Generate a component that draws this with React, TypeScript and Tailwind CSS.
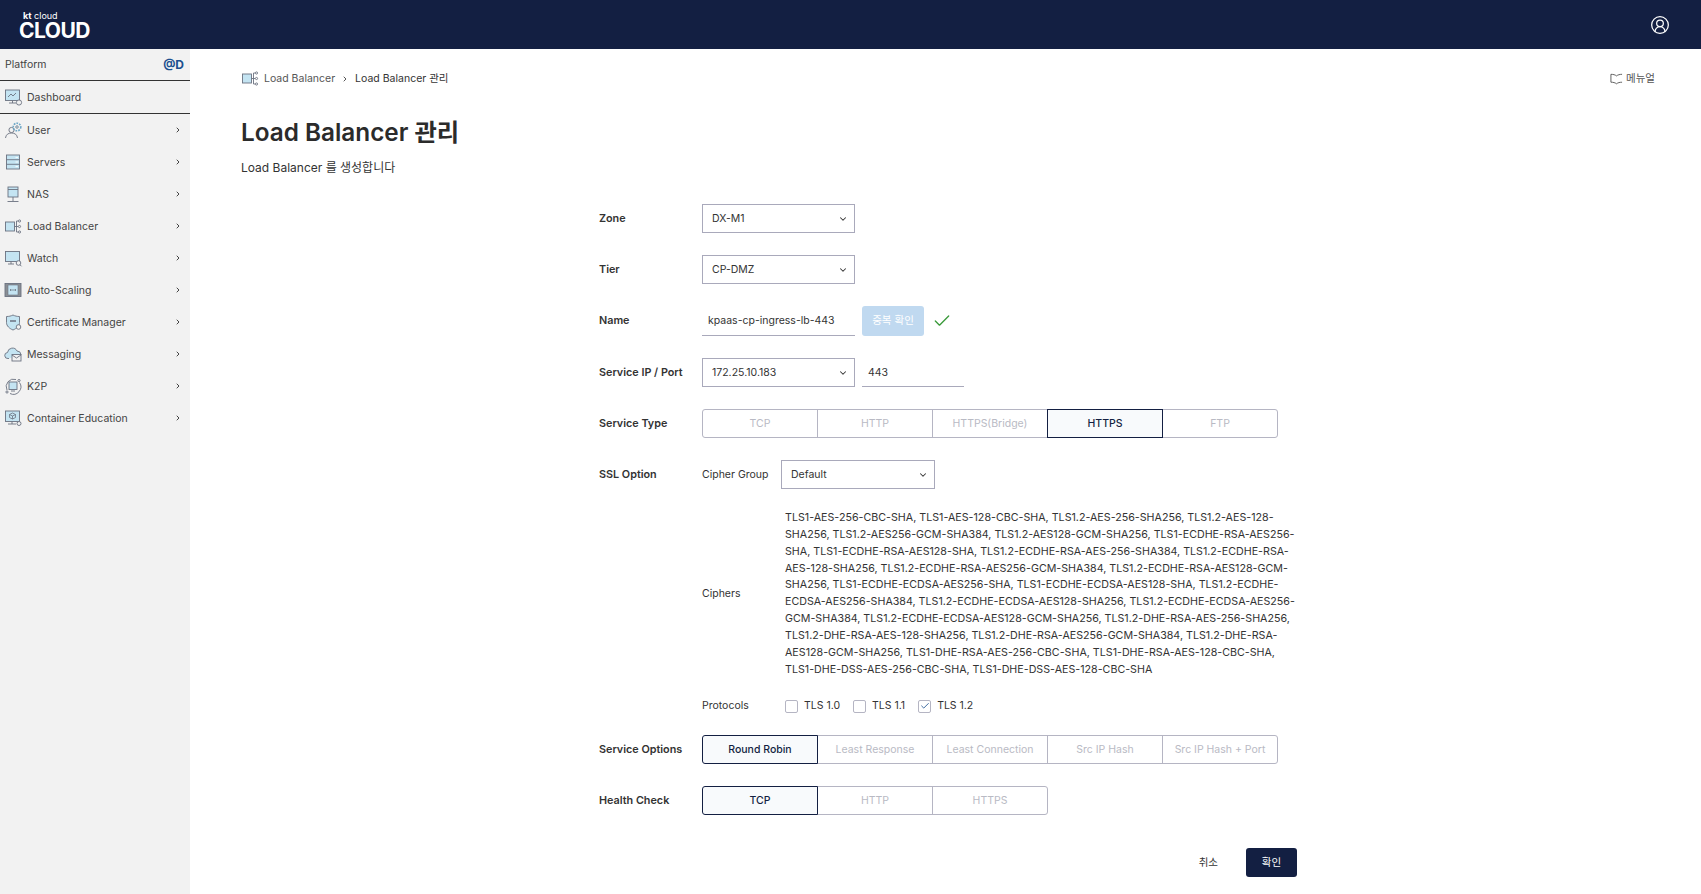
import { ChevronDown, ChevronRight, Check, CircleUserRound } from "lucide-react";
import type { ReactNode } from "react";

const line = "#6b7280";
const tint = "#c4e4f2";

const icons: Record<string, ReactNode> = {
  dashboard: (
    <>
      <rect x="1.500" y="2" width="14" height="10.500" fill={tint} stroke={line} />
      <path d="M4 9l3-3 2 2 3-3" fill="none" stroke={line} />
      <path d="M5 15h7M8.500 12.500V15" stroke={line} />
      <circle cx="15" cy="14.500" r="2.600" fill="#f2f2f2" stroke={line} />
    </>
  ),
  user: (
    <>
      <circle cx="7.500" cy="9" r="2.600" fill="none" stroke={line} />
      <path d="M1.500 17c.5-3.500 2.700-5 6-5s5.500 1.500 6 5" fill="none" stroke={line} />
      <circle cx="13" cy="6" r="3.800" fill="none" stroke="#6fa8c7" strokeWidth="1.600" strokeDasharray="1.800 1" />
      <circle cx="13" cy="6" r="1.300" fill={tint} stroke={line} strokeWidth="0.700" />
    </>
  ),
  servers: (
    <>
      <rect x="2.500" y="2" width="13" height="14" fill={tint} stroke={line} />
      <path d="M2.500 6.700h13M2.500 11.300h13" stroke={line} />
      <path d="M11.500 4.400h2.500M11.500 9h2.500M11.500 13.600h2.500" stroke="#fff" />
    </>
  ),
  nas: (
    <>
      <rect x="4" y="2" width="10" height="10" fill={tint} stroke={line} />
      <path d="M4 4.500h10M9 12v4M3.500 16.500h11" stroke={line} />
    </>
  ),
  lb: (
    <>
      <rect x="1.500" y="5" width="9" height="9" fill={tint} stroke={line} />
      <path d="M10.500 9.500h2M12.500 4v11M12.500 4h1.500M12.500 15h1.500M12.500 9.500h1.500" fill="none" stroke={line} />
      <circle cx="15.500" cy="4" r="1.100" fill="none" stroke={line} />
      <circle cx="15.500" cy="9.500" r="1.100" fill="none" stroke={line} />
      <circle cx="15.500" cy="15" r="1.100" fill="none" stroke={line} />
    </>
  ),
  watch: (
    <>
      <rect x="1.500" y="2.500" width="14" height="10" fill={tint} stroke={line} />
      <path d="M4 15h6M7 12.500V15" stroke={line} />
      <circle cx="14.500" cy="14" r="2.300" fill="#f2f2f2" stroke={line} />
      <path d="M16 15.800l1.500 1.500" stroke={line} />
    </>
  ),
  scaling: (
    <>
      <rect x="1" y="2.500" width="16" height="13" fill="#8a8f94" stroke={line} />
      <rect x="4" y="4" width="10" height="10" fill={tint} stroke={line} strokeWidth="0.600" />
      <path d="M6 9h6M6 9l1-1M6 9l1 1M12 9l-1-1M12 9l-1 1" fill="none" stroke={line} strokeWidth="0.700" />
    </>
  ),
  cert: (
    <>
      <path d="M2.500 3.500c2.500 0 4.500-.5 6.500-1.500 2 1 4 1.500 6.500 1.500v6c0 3.500-3 6-6.500 7.500-3.500-1.500-6.500-4-6.500-7.500z" fill={tint} stroke={line} />
      <path d="M6 8h6" stroke={line} strokeWidth="1.500" />
      <circle cx="14.500" cy="14" r="2.300" fill="#f2f2f2" stroke={line} />
    </>
  ),
  messaging: (
    <>
      <path d="M5 13.500H4a3 3 0 0 1-.5-6 5 5 0 0 1 9.500-1.500 4 4 0 0 1 4 3.500" fill={tint} stroke={line} />
      <rect x="8" y="9.500" width="9" height="6.500" fill="#f2f2f2" stroke={line} />
      <path d="M8 10l4.500 3 4.500-3" fill="none" stroke={line} />
    </>
  ),
  k2p: (
    <>
      <path d="M3 13a7.500 7.500 0 0 1 9-10.500M15.500 5.500a7.500 7.500 0 0 1-9.500 11" fill="none" stroke={line} />
      <rect x="5" y="5" width="8" height="7.500" fill={tint} stroke={line} />
      <path d="M7 14h4" stroke={line} />
      <circle cx="15" cy="3.500" r="1.100" fill="none" stroke={line} />
      <circle cx="3" cy="15" r="1.100" fill="none" stroke={line} />
    </>
  ),
  container: (
    <>
      <rect x="1.500" y="2" width="14" height="10.500" fill={tint} stroke={line} />
      <path d="M8.500 4l3 1.500v3l-3 1.500-3-1.500v-3zM5.500 5.500l3 1.500 3-1.500M8.500 7v3" fill="none" stroke={line} strokeWidth="0.800" />
      <path d="M4 15h8M8 12.500V15" stroke={line} />
      <circle cx="15" cy="14.500" r="2" fill="#f2f2f2" stroke={line} />
    </>
  ),
};

function NavIcon({ name }: { name: string }) {
  return (
    <svg viewBox="0 0 19 19" className="w-[19px] h-[19px] shrink-0" strokeWidth="0.900">
      {icons[name]}
    </svg>
  );
}

const menu = [
  ["User", "user"],
  ["Servers", "servers"],
  ["NAS", "nas"],
  ["Load Balancer", "lb"],
  ["Watch", "watch"],
  ["Auto-Scaling", "scaling"],
  ["Certificate Manager", "cert"],
  ["Messaging", "messaging"],
  ["K2P", "k2p"],
  ["Container Education", "container"],
];

function Sidebar() {
  return (
    <aside className="w-[190px] shrink-0 bg-[#f2f2f2] text-[#444] text-[10.5px]">
      <div className="h-[31px] pl-[5px] pr-[6px] flex items-center justify-between">
        <span>Platform</span>
        <span className="font-bold text-[12px] text-[#1b4f8f]">@D</span>
      </div>
      <div className="h-[34px] flex items-center gap-[4px] pl-[4px] border-y border-[#333]">
        <NavIcon name="dashboard" />
        <span className="pt-[1px]">Dashboard</span>
      </div>
      <div>
        {menu.map(([label, icon]) => (
          <div key={label} className="h-[32px] flex items-center gap-[4px] pl-[4px] pr-[8px]">
            <NavIcon name={icon} />
            <span className="flex-1 pt-[1px]">{label}</span>
            <ChevronRight className="w-[8px] h-[8px] text-[#444]" strokeWidth={3} />
          </div>
        ))}
      </div>
    </aside>
  );
}

function Select({ value, width }: { value: string; width: string }) {
  return (
    <div className={`${width} h-[29px] border border-[#a9a9bb] pl-[9px] pr-[6px] flex items-center justify-between text-[#333]`}>
      <span>{value}</span>
      <ChevronDown className="w-[10px] h-[10px] text-[#333]" strokeWidth={2.5} />
    </div>
  );
}

function Segments({ items, active }: { items: string[]; active: string }) {
  return (
    <div className="flex">
      {items.map((item, i) => (
        <div
          key={item}
          className={`w-[116px] h-[29px] flex items-center justify-center border -ml-px first:ml-0 ${
            i === 0 ? "rounded-l-[3px]" : ""
          } ${i === items.length - 1 ? "rounded-r-[3px]" : ""} ${
            item === active
              ? "relative z-10 border-[#131f42] bg-[#f8fafc] text-[#131f42] font-medium"
              : "border-[#b5b5c3] text-[#b9bac4]"
          }`}
        >
          {item}
        </div>
      ))}
    </div>
  );
}

function Row({ label, children }: { label: string; children: ReactNode }) {
  return (
    <div className="flex items-center min-h-[29px]">
      <div className="w-[103px] shrink-0 pt-[1px] font-semibold text-[10.8px] text-[#333]">{label}</div>
      {children}
    </div>
  );
}

const ciphers =
  "TLS1-AES-256-CBC-SHA, TLS1-AES-128-CBC-SHA, TLS1.2-AES-256-SHA256, TLS1.2-AES-128-SHA256, TLS1.2-AES256-GCM-SHA384, TLS1.2-AES128-GCM-SHA256, TLS1-ECDHE-RSA-AES256-SHA, TLS1-ECDHE-RSA-AES128-SHA, TLS1.2-ECDHE-RSA-AES-256-SHA384, TLS1.2-ECDHE-RSA-AES-128-SHA256, TLS1.2-ECDHE-RSA-AES256-GCM-SHA384, TLS1.2-ECDHE-RSA-AES128-GCM-SHA256, TLS1-ECDHE-ECDSA-AES256-SHA, TLS1-ECDHE-ECDSA-AES128-SHA, TLS1.2-ECDHE-ECDSA-AES256-SHA384, TLS1.2-ECDHE-ECDSA-AES128-SHA256, TLS1.2-ECDHE-ECDSA-AES256-GCM-SHA384, TLS1.2-ECDHE-ECDSA-AES128-GCM-SHA256, TLS1.2-DHE-RSA-AES-256-SHA256, TLS1.2-DHE-RSA-AES-128-SHA256, TLS1.2-DHE-RSA-AES256-GCM-SHA384, TLS1.2-DHE-RSA-AES128-GCM-SHA256, TLS1-DHE-RSA-AES-256-CBC-SHA, TLS1-DHE-RSA-AES-128-CBC-SHA, TLS1-DHE-DSS-AES-256-CBC-SHA, TLS1-DHE-DSS-AES-128-CBC-SHA";

function Protocol({ label, checked }: { label: string; checked?: boolean }) {
  return (
    <div className="flex items-center gap-[6px]">
      <span className="w-[13px] h-[13px] border border-[#b5b5c3] rounded-[2px] flex items-center justify-center">
        {checked && <Check className="w-[10px] h-[10px] text-[#1b4f8f]" strokeWidth={2} />}
      </span>
      <span>{label}</span>
    </div>
  );
}

function Form() {
  return (
    <div className="w-[698px] ml-[409px] mt-[27px] flex flex-col text-[10.5px] text-[#333]">
      <div className="flex flex-col gap-[22px]">
        <Row label="Zone">
          <Select value="DX-M1" width="w-[153px]" />
        </Row>
        <Row label="Tier">
          <Select value="CP-DMZ" width="w-[153px]" />
        </Row>
        <Row label="Name">
          <div className="w-[153px] h-[30px] border-b border-[#a9a9bb] pl-[6px] pt-[1px] flex items-center">kpaas-cp-ingress-lb-443</div>
          <div className="ml-[7px] w-[62px] h-[30px] rounded-[3px] bg-[#c0d9f0] text-white flex items-center justify-center">중복 확인</div>
          <Check className="ml-[8px] w-[20px] h-[20px] text-[#3a9a3a]" strokeWidth={1.6} />
        </Row>
        <Row label="Service IP / Port">
          <Select value="172.25.10.183" width="w-[153px]" />
          <div className="ml-[7px] w-[102px] h-[29px] border-b border-[#a9a9bb] pl-[6px] pt-[1px] flex items-center">443</div>
        </Row>
        <Row label="Service Type">
          <Segments items={["TCP", "HTTP", "HTTPS(Bridge)", "HTTPS", "FTP"]} active="HTTPS" />
        </Row>
        <Row label="SSL Option">
          <span className="w-[79px]">Cipher Group</span>
          <Select value="Default" width="w-[154px]" />
        </Row>
      </div>
      <div className="flex items-center mt-[21px] ml-[103px]">
        <span className="w-[83px] shrink-0">Ciphers</span>
        <p className="w-[515px] text-[10.7px] leading-[16.85px]">{ciphers}</p>
      </div>
      <div className="flex items-center mt-[20px] ml-[103px]">
        <span className="w-[83px] shrink-0">Protocols</span>
        <div className="flex gap-[13px]">
          <Protocol label="TLS 1.0" />
          <Protocol label="TLS 1.1" />
          <Protocol label="TLS 1.2" checked />
        </div>
      </div>
      <div className="flex flex-col gap-[22px] mt-[21px]">
        <Row label="Service Options">
          <Segments items={["Round Robin", "Least Response", "Least Connection", "Src IP Hash", "Src IP Hash + Port"]} active="Round Robin" />
        </Row>
        <Row label="Health Check">
          <Segments items={["TCP", "HTTP", "HTTPS"]} active="TCP" />
        </Row>
      </div>
      <div className="flex justify-end items-center gap-[28px] mt-[33px]">
        <span className="text-[#333]">취소</span>
        <div className="w-[51px] h-[29px] rounded-[3px] bg-[#131f42] text-white flex items-center justify-center">확인</div>
      </div>
    </div>
  );
}

export default function App() {
  return (
    <div className="min-h-[894px] flex flex-col bg-white font-[Inter,'Noto_Sans_CJK_KR',sans-serif]">
      <header className="h-[49px] bg-[#131f42] flex items-center justify-between pl-[19px] pr-[31px] text-white">
        <div className="flex flex-col gap-[2px]">
          <span className="text-[9px] pl-[4px] leading-[9px]">
            <b>kt</b> cloud
          </span>
          <span className="text-[21px] font-bold leading-[17px] tracking-[-0.5px]">CLOUD</span>
        </div>
        <CircleUserRound className="w-[20px] h-[20px]" strokeWidth={1.5} />
      </header>
      <div className="flex flex-1">
        <Sidebar />
        <main className="flex-1 min-w-0">
          <div className="pl-[51px] pr-[46px] pt-[20px] flex items-center justify-between text-[10.5px]">
            <div className="flex items-center gap-[3px] text-[#555]">
              <NavIcon name="lb" />
              <span className="ml-[1px]">Load Balancer</span>
              <ChevronRight className="w-[8px] h-[8px] mx-[3px]" strokeWidth={3} />
              <span className="text-[#333]">Load Balancer 관리</span>
            </div>
            <div className="flex items-center gap-[3px] text-[#555]">
              <svg viewBox="0 0 14 14" className="w-[13px] h-[13px]" fill="none" stroke="#444" strokeWidth="0.900">
                <path d="M1 2.500c2.500 0 4.500.5 6 1.700 1.500-1.200 3.500-1.700 6-1.700M1 2.500v8.500c2.500 0 4.500.5 6 1.700 1.500-1.200 3.500-1.700 6-1.700" />
              </svg>
              <span>메뉴얼</span>
            </div>
          </div>
          <h1 className="pl-[51px] mt-[28px] text-[24.3px] leading-[32px] font-semibold text-[#2b2b2b]">Load Balancer 관리</h1>
          <p className="pl-[51px] mt-[11px] text-[12px] leading-[18px] text-[#333]">Load Balancer 를 생성합니다</p>
          <Form />
        </main>
      </div>
    </div>
  );
}
